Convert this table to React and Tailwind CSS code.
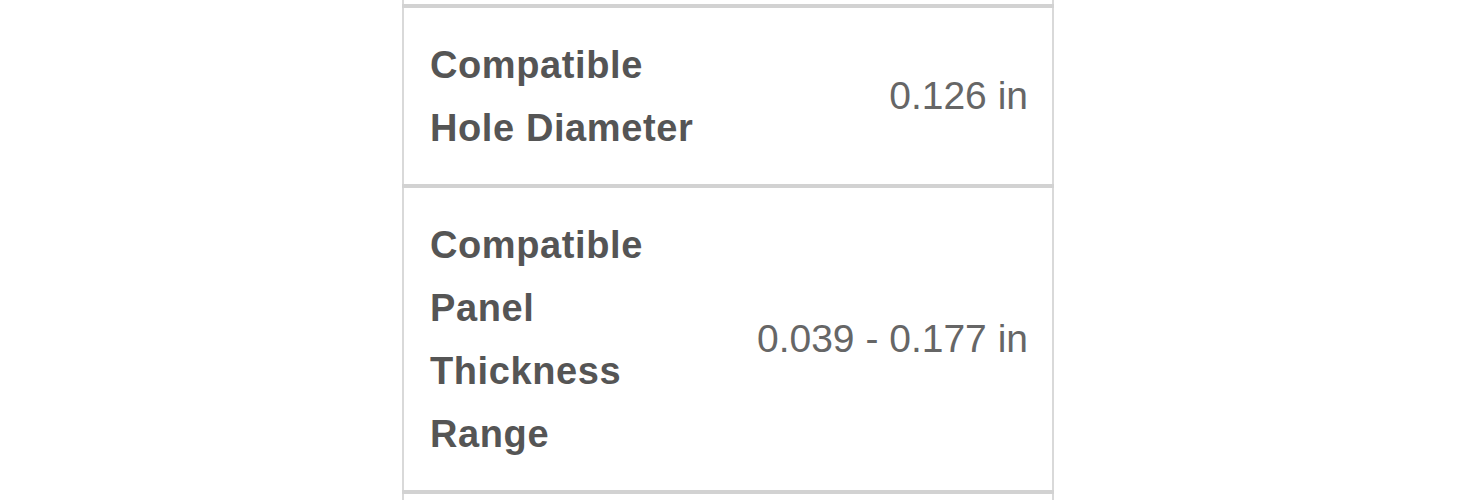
const ROWS = [
  { label: "Compatible Hole Diameter", value: "0.126 in" },
  { label: "Compatible Panel Thickness Range", value: "0.039 - 0.177 in" },
];

function Divider() {
  return <div className="h-[4px] bg-[#d2d2d2]" />;
}

export default function App() {
  return (
    <div className="min-h-[500px] bg-white font-['Liberation_Sans',Arial,sans-serif]">
      <div className="ml-[402px] w-[652px]">
        <div className="h-[4px] border-x-2 border-[#d9d9d9]" />
        {ROWS.map((row) => (
          <div key={row.label}>
            <Divider />
            <div className="flex items-center justify-between border-x-2 border-[#d9d9d9] pl-[26px] pr-[24px] pt-[26px] pb-[24px]">
              <div className="w-[285px] text-[38px] font-bold leading-[63px] tracking-[0.6px] text-[#555555]">
                {row.label}
              </div>
              <div className="mb-[4px] text-right text-[39px] leading-[63px] text-[#666666]">
                {row.value}
              </div>
            </div>
          </div>
        ))}
        <Divider />
        <div className="h-[6px] border-x-2 border-[#d9d9d9]" />
      </div>
    </div>
  );
}
